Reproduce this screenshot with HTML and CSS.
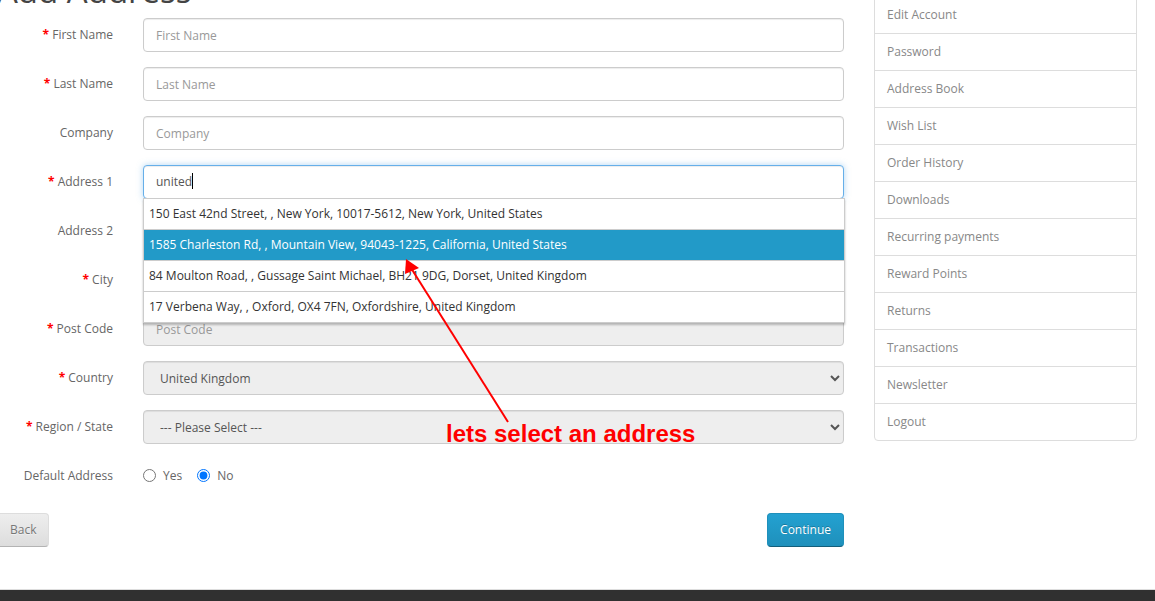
FILE: index.html
```html
<!DOCTYPE html>
<html lang="en">
<head>
    <meta charset="UTF-8">
    <meta name="viewport" content="width=device-width, initial-scale=1.0">
    <title>Add Address</title>
    <link rel="stylesheet" href="styles.css">
</head>
<body>
    <div class="page">
        <div id="content">
            <h1>Add Address</h1>
            <form class="form-horizontal">
                <div class="form-group required">
                    <label class="control-label">First Name</label>
                    <div class="field"><input type="text" class="form-control" placeholder="First Name"></div>
                </div>
                <div class="form-group required">
                    <label class="control-label">Last Name</label>
                    <div class="field"><input type="text" class="form-control" placeholder="Last Name"></div>
                </div>
                <div class="form-group">
                    <label class="control-label">Company</label>
                    <div class="field"><input type="text" class="form-control" placeholder="Company"></div>
                </div>
                <div class="form-group required">
                    <label class="control-label">Address 1</label>
                    <div class="field autocomplete">
                        <div class="form-control focused">united<span class="caret"></span></div>
                        <ul class="dropdown-menu">
                            <li>150 East 42nd Street, , New York, 10017-5612, New York, United States</li>
                            <li class="active">1585 Charleston Rd, , Mountain View, 94043-1225, California, United States</li>
                            <li>84 Moulton Road, , Gussage Saint Michael, BH21 9DG, Dorset, United Kingdom</li>
                            <li>17 Verbena Way, , Oxford, OX4 7FN, Oxfordshire, United Kingdom</li>
                        </ul>
                    </div>
                </div>
                <div class="form-group">
                    <label class="control-label">Address 2</label>
                    <div class="field"><input type="text" class="form-control" placeholder="Address 2"></div>
                </div>
                <div class="form-group required">
                    <label class="control-label">City</label>
                    <div class="field"><input type="text" class="form-control" placeholder="City"></div>
                </div>
                <div class="form-group required">
                    <label class="control-label">Post Code</label>
                    <div class="field"><input type="text" class="form-control locked" placeholder="Post Code" readonly></div>
                </div>
                <div class="form-group required">
                    <label class="control-label">Country</label>
                    <div class="field">
                        <select class="form-control locked">
                            <option>United Kingdom</option>
                        </select>
                    </div>
                </div>
                <div class="form-group required">
                    <label class="control-label">Region / State</label>
                    <div class="field">
                        <select class="form-control locked">
                            <option>--- Please Select ---</option>
                        </select>
                    </div>
                </div>
                <div class="form-group">
                    <label class="control-label">Default Address</label>
                    <div class="field radios">
                        <label class="radio-inline"><input type="radio" name="default"> Yes</label>
                        <label class="radio-inline"><input type="radio" name="default" checked> No</label>
                    </div>
                </div>
                <div class="buttons">
                    <a class="btn btn-default">Back</a>
                    <button type="button" class="btn btn-primary">Continue</button>
                </div>
            </form>
        </div>

        <aside id="column-right">
            <div class="list-group">
                <a class="list-group-item">Edit Account</a>
                <a class="list-group-item">Password</a>
                <a class="list-group-item">Address Book</a>
                <a class="list-group-item">Wish List</a>
                <a class="list-group-item">Order History</a>
                <a class="list-group-item">Downloads</a>
                <a class="list-group-item">Recurring payments</a>
                <a class="list-group-item">Reward Points</a>
                <a class="list-group-item">Returns</a>
                <a class="list-group-item">Transactions</a>
                <a class="list-group-item">Newsletter</a>
                <a class="list-group-item">Logout</a>
            </div>
        </aside>
    </div>

    <footer></footer>

    <!-- screenshot annotation -->
    <svg class="annotation-arrow" width="1155" height="601" viewBox="0 0 1155 601">
        <line x1="508" y1="422" x2="411" y2="268" stroke="#ff0000" stroke-width="2"/>
        <polygon points="406,259 419,268 405,274" fill="#ff0000"/>
    </svg>
    <div class="annotation-text">lets select an address</div>
</body>
</html>
```

FILE: styles.css
```css
* {
    box-sizing: border-box;
}
body {
    margin: 0;
    font-family: "Open Sans", sans-serif;
    font-size: 12px;
    line-height: 17px;
    color: #666;
    background: #fff;
    overflow: hidden;
}
.page {
    display: flex;
    margin-left: -18px;
    margin-top: -27px;
}
#content {
    width: 877px;
    padding: 0 15px 42px;
}
#column-right {
    width: 293px;
    padding: 0 15px;
}
h1 {
    font-size: 33px;
    font-weight: normal;
    line-height: 36px;
    color: #444;
    margin: 0 0 9px;
}
.form-group {
    display: grid;
    grid-template-columns: 146px 1fr;
    margin: 0 -15px 15px;
    min-height: 34px;
}
.control-label {
    padding: 8px 15px 0;
    text-align: right;
}
.required .control-label:before {
    content: '* ';
    color: #f00;
    font-weight: bold;
}
.field {
    padding: 0 15px;
}
.form-control {
    display: block;
    width: 100%;
    height: 34px;
    padding: 6px 12px;
    font-family: inherit;
    font-size: 12px;
    line-height: 20px;
    color: #555;
    background: #fff;
    border: 1px solid #ccc;
    border-radius: 4px;
    box-shadow: inset 0 1px 1px rgba(0, 0, 0, 0.075);
}
.form-control::placeholder {
    color: #999;
}
.form-control.locked {
    background-color: #eee;
}
.focused {
    border-color: #66afe9;
    box-shadow: inset 0 1px 1px rgba(0, 0, 0, 0.075), 0 0 6px rgba(102, 175, 233, 0.5);
}
.caret {
    display: inline-block;
    width: 1px;
    height: 16px;
    background: #000;
    vertical-align: -3px;
}
.autocomplete {
    position: relative;
}
.dropdown-menu {
    position: absolute;
    top: 33px;
    left: 15px;
    width: 702px;
    margin: 0;
    padding: 0;
    list-style: none;
    background: #fff;
    border: 1px solid #ccc;
    box-shadow: 0 2px 2px rgba(0, 0, 0, 0.25);
    z-index: 10;
}
.dropdown-menu li {
    padding: 6px 5px;
    line-height: 18px;
    color: #333;
    border-bottom: 1px solid #ccc;
    white-space: nowrap;
}
.dropdown-menu li:last-child {
    border-bottom: none;
}
.dropdown-menu li.active {
    background: #229ac8;
    color: #fff;
}
.radios {
    display: flex;
    gap: 15px;
    padding-top: 8px;
}
.radio-inline {
    display: flex;
    align-items: center;
    height: 17px;
    gap: 7px;
    color: #666;
}
.radio-inline input {
    margin: 0;
    width: 13px;
    height: 13px;
}
.buttons {
    display: flex;
    justify-content: space-between;
    margin-top: 20px;
}
.btn {
    display: inline-block;
    padding: 7px 12px;
    font-family: inherit;
    font-size: 12px;
    line-height: 18px;
    border: 1px solid;
    border-radius: 4px;
    cursor: pointer;
}
.btn-default {
    color: #777;
    text-shadow: 0 1px 0 rgba(255, 255, 255, 0.5);
    background-color: #e7e7e7;
    background-image: linear-gradient(to bottom, #eeeeee, #dddddd);
    border-color: #dddddd #dddddd #b3b3b3 #b7b7b7;
}
.btn-primary {
    color: #fff;
    text-shadow: 0 -1px 0 rgba(0, 0, 0, 0.25);
    background-color: #229ac8;
    background-image: linear-gradient(to bottom, #23a1d1, #1f90bb);
    border-color: #1f90bb #1f90bb #145e7a;
}
.list-group {
    margin-top: 23px;
}
.list-group-item {
    display: block;
    padding: 9px 12px;
    margin-bottom: -1px;
    line-height: 18px;
    color: #888;
    border: 1px solid #ddd;
    background: #fff;
}
.list-group-item:last-child {
    border-radius: 0 0 4px 4px;
    margin-bottom: 0;
}
footer {
    height: 40px;
    background: #303030;
    border-top: 1px solid #ddd;
}
.annotation-arrow {
    position: absolute;
    top: 0;
    left: 0;
    z-index: 20;
    pointer-events: none;
}
.annotation-text {
    position: absolute;
    top: 422px;
    left: 446px;
    z-index: 20;
    font-family: "Liberation Sans", Arial, sans-serif;
    font-size: 24px;
    line-height: 24px;
    font-weight: bold;
    color: #ff0000;
}
```
